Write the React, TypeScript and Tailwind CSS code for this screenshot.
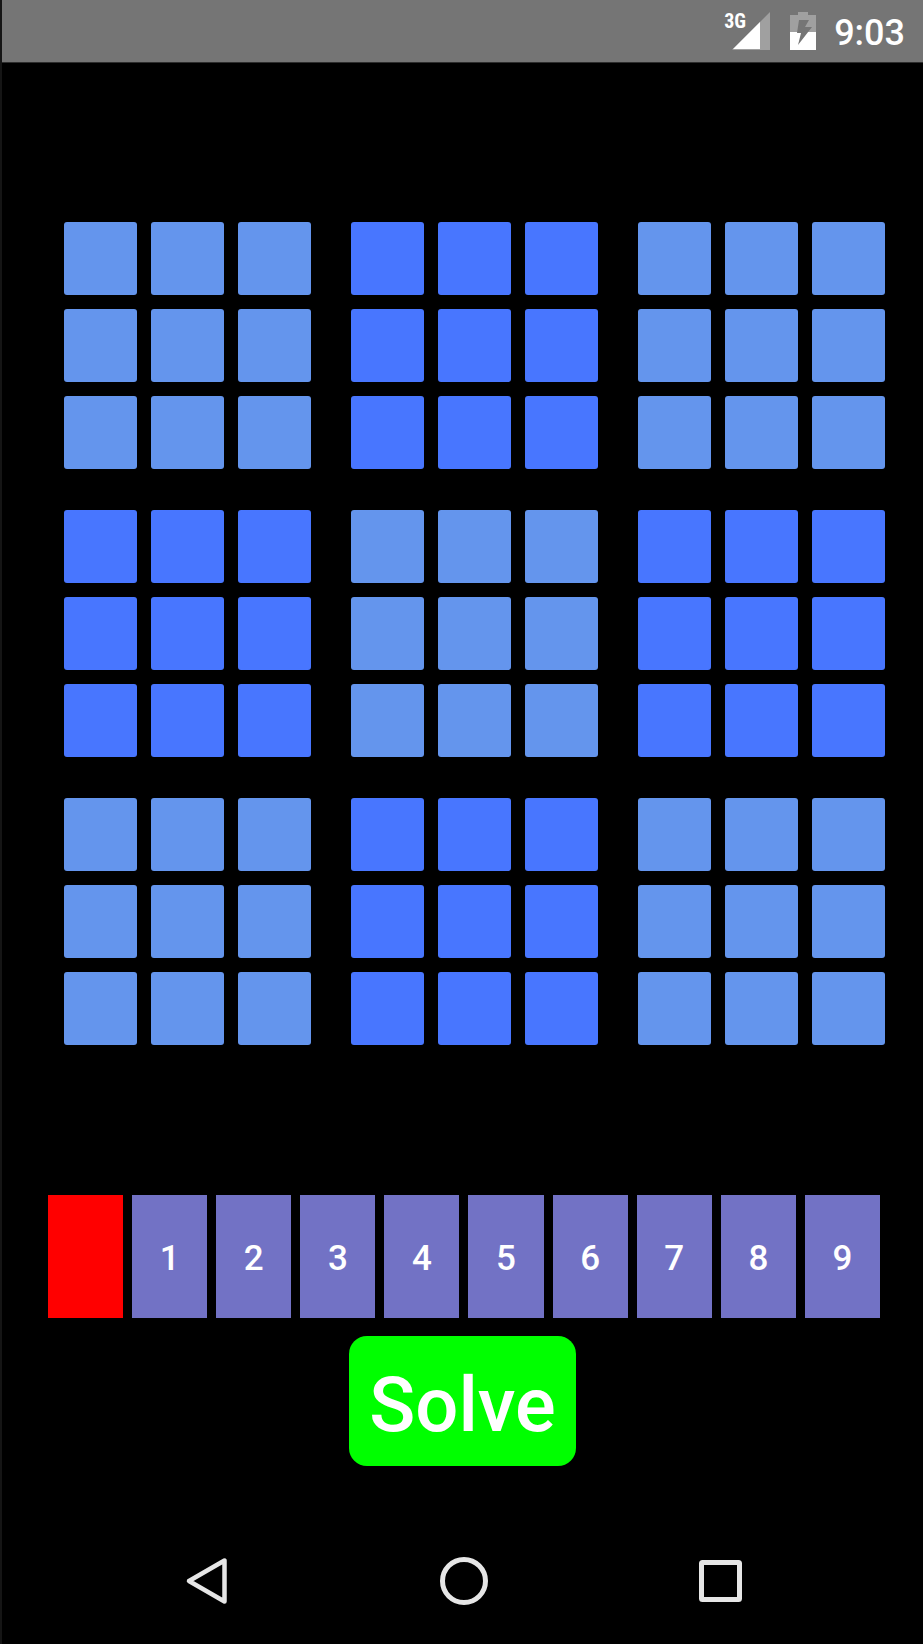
import React from "react";

const KEYS = ["", "1", "2", "3", "4", "5", "6", "7", "8", "9"];
const NINE = [0, 1, 2, 3, 4, 5, 6, 7, 8];

function StatusBar() {
  return (
    <header className="flex h-[63px] items-center justify-end border-b border-[#2e2e2e] bg-[#757575] pr-[18px] text-white">
      <div className="relative h-[38px] w-[46px]">
        <svg viewBox="0 0 46 38" className="h-full w-full" aria-hidden="true">
          <path d="M46 0V38H8Z" fill="#a0a0a0" />
          <path d="M36 10V37H9Z" fill="#fff" />
        </svg>
        <span className="absolute top-0 left-0 font-['Roboto_Condensed','Liberation_Sans_Narrow',Roboto,sans-serif] text-[20px] leading-[18px] font-bold">
          3G
        </span>
      </div>
      <svg viewBox="0 0 26 38" className="ml-5 h-[38px] w-[26px]" aria-hidden="true">
        <path d="M8 0H18V3H26V20H0V3H8Z" fill="#a0a0a0" />
        <path d="M0 20H26V38H0Z" fill="#fff" />
        <path d="M9 8H19L15 15H22L8 33L11 21H7Z" fill="#757575" />
      </svg>
      <span className="ml-[18px] pt-1 text-[36px] leading-[40px] font-medium">9:03</span>
    </header>
  );
}

function Block({ index }: { index: number }) {
  const tone = index % 2 === 0 ? "bg-[#6495ed]" : "bg-[#4876ff]";
  return (
    <div className="grid grid-cols-3 gap-[14px]">
      {NINE.map((cell) => (
        <button
          key={cell}
          type="button"
          aria-label={`Block ${index + 1}, cell ${cell + 1}`}
          className={`aspect-square rounded-[3px] ${tone}`}
        />
      ))}
    </div>
  );
}

export default function App() {
  return (
    <div className="flex min-h-screen flex-col border-l-2 border-[#151515] bg-black font-[Roboto,sans-serif]">
      <StatusBar />
      <main className="flex flex-1 flex-col">
        <section className="mt-[159px] mr-[38px] ml-[62px] grid grid-cols-3 gap-x-10 gap-y-[41px]">
          {NINE.map((block) => (
            <Block key={block} index={block} />
          ))}
        </section>
        <section className="mt-[150px] mr-[43px] ml-[46px] grid grid-cols-10 gap-x-[9px]">
          {KEYS.map((key) => (
            <button
              key={key}
              type="button"
              aria-label={key || "Clear"}
              className={`h-[123px] pt-1 text-[35px] leading-[40px] font-medium text-white ${key ? "bg-[#7272c5]" : "bg-[#ff0000]"}`}
            >
              {key}
            </button>
          ))}
        </section>
        <button
          type="button"
          className="mt-[18px] h-[130px] w-[227px] self-center rounded-[18px] bg-[#00ff00] pt-2 text-[76px] leading-[80px] font-medium text-white"
        >
          Solve
        </button>
      </main>
      <nav className="flex items-center justify-center gap-[196px] pb-[38px]">
        <button type="button" aria-label="Back">
          <svg viewBox="0 0 60 50" className="h-[50px] w-[60px]" fill="none" stroke="#e6e6e6" strokeWidth="4.500">
            <path d="M47.500 4.500V45.500L12 25Z" strokeLinejoin="round" />
          </svg>
        </button>
        <button type="button" aria-label="Home">
          <svg viewBox="0 0 60 50" className="h-[50px] w-[60px]" fill="none" stroke="#e6e6e6" strokeWidth="5">
            <circle cx="31" cy="25" r="21.500" />
          </svg>
        </button>
        <button type="button" aria-label="Overview">
          <svg viewBox="0 0 60 50" className="h-[50px] w-[60px]" fill="none" stroke="#e6e6e6" strokeWidth="5">
            <rect x="12.500" y="6.500" width="38" height="37" rx="1" />
          </svg>
        </button>
      </nav>
    </div>
  );
}
